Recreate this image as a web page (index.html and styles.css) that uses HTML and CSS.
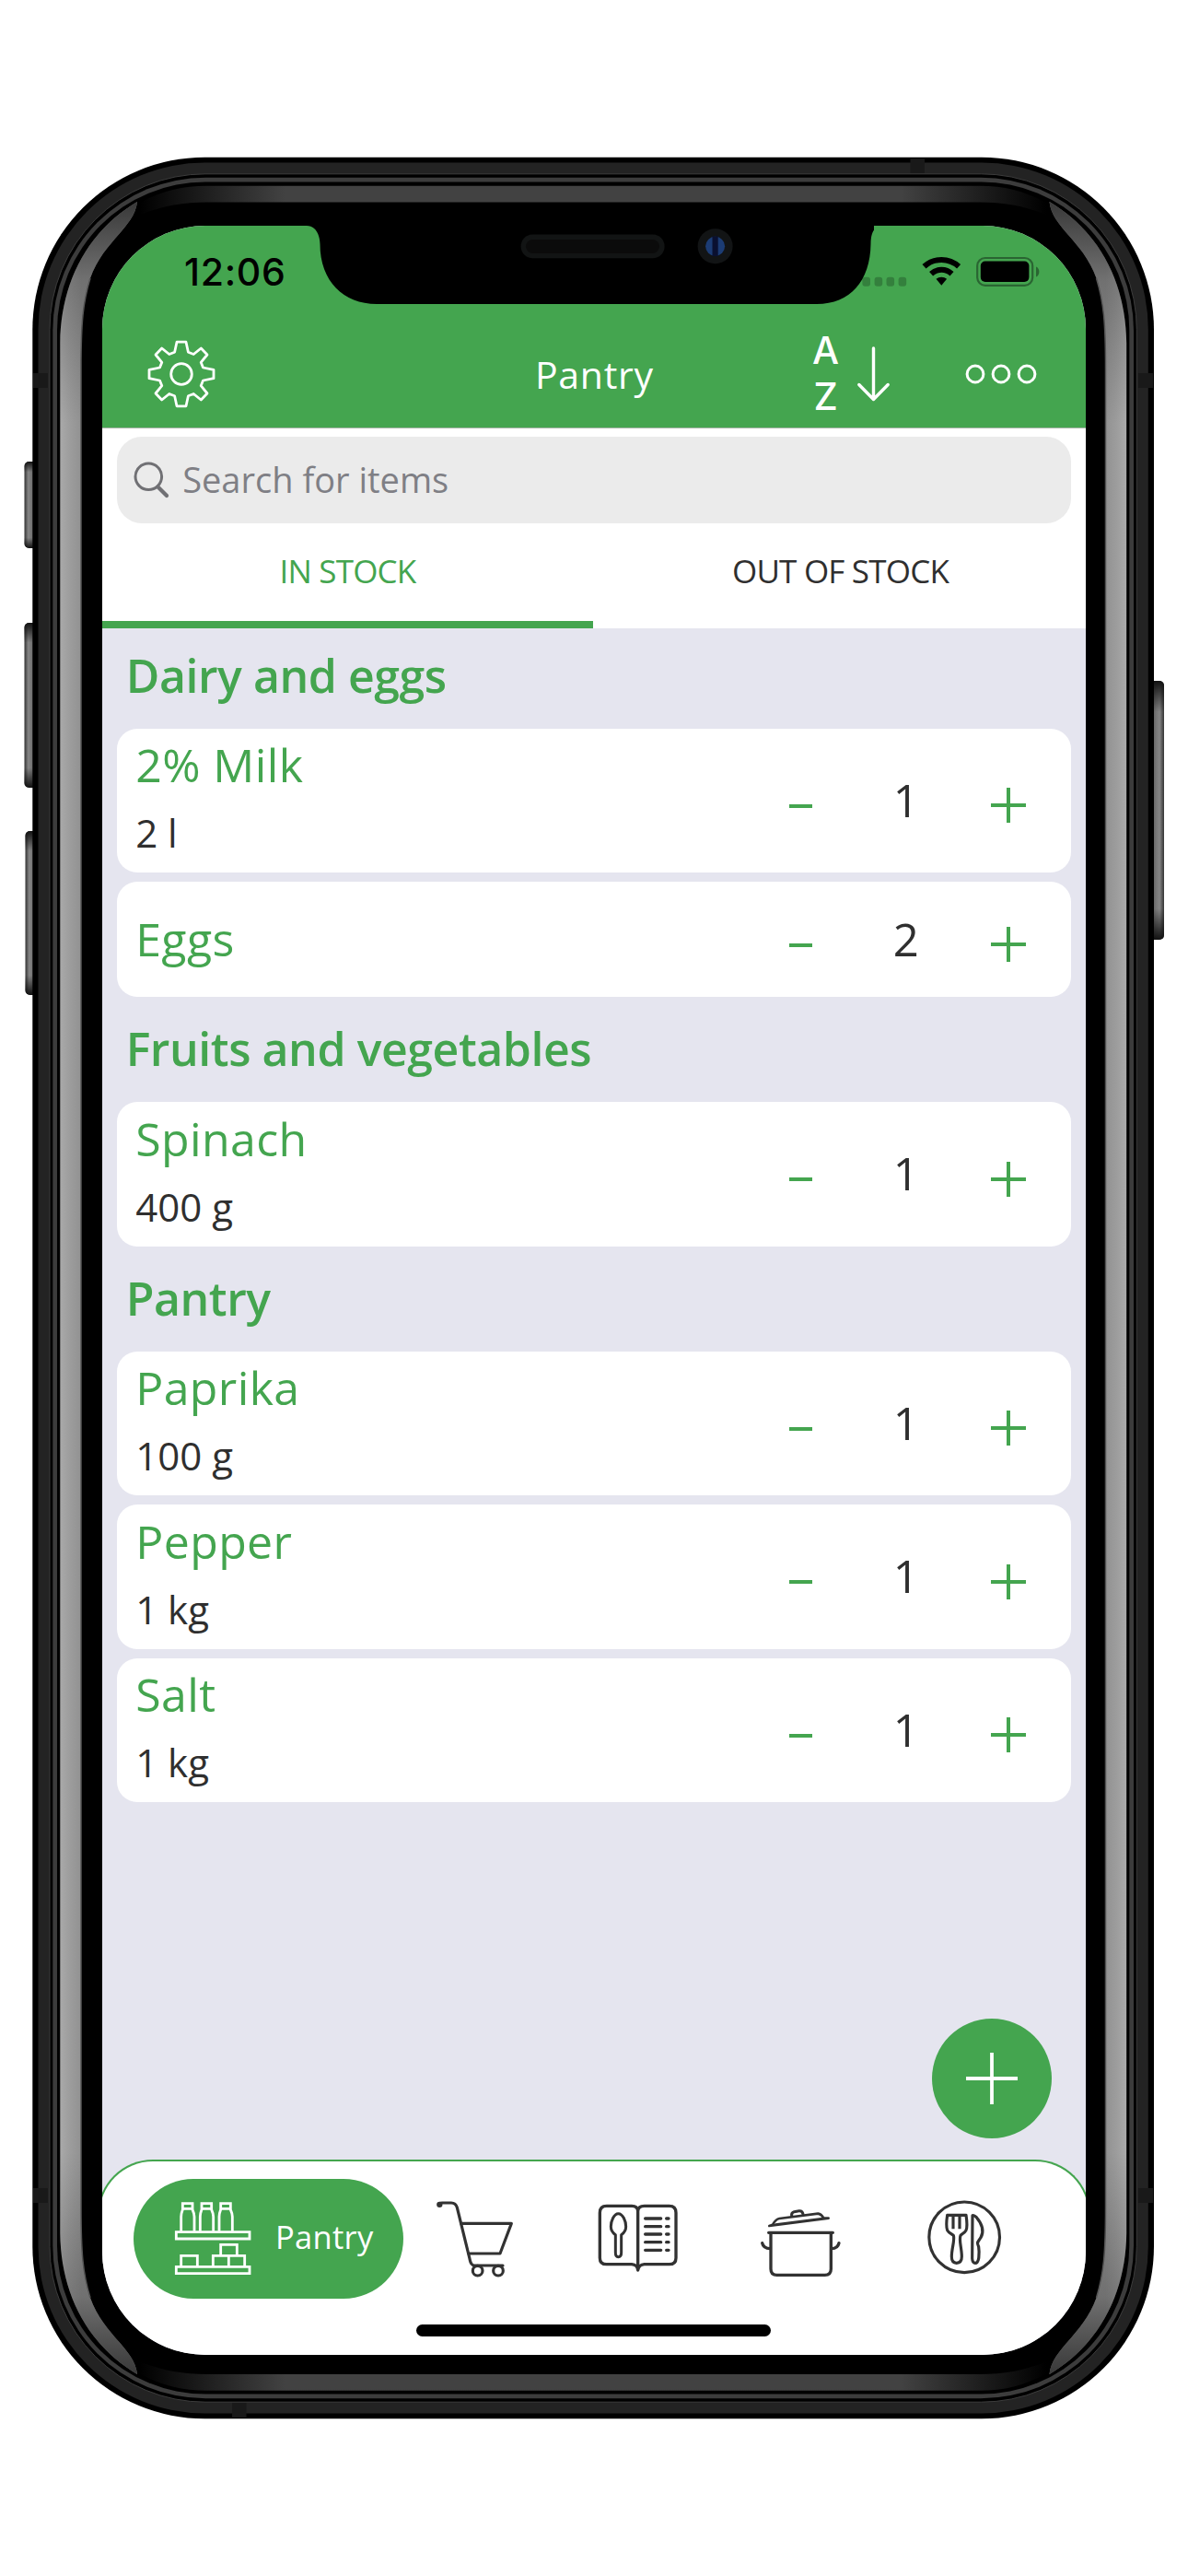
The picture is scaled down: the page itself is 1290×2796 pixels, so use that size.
FILE: index.html
```html
<!DOCTYPE html>
<html lang="en">
<head>
<meta charset="utf-8">
<title>Pantry</title>
<link rel="stylesheet" href="styles.css">
</head>
<body>
<main class="stage">
  <svg class="chassis" viewBox="0 0 1290 2796" aria-hidden="true">
    <defs>
      <linearGradient id="btnL" x1="0" x2="1" y1="0" y2="0">
        <stop offset="0" stop-color="#333"/><stop offset=".3" stop-color="#858585"/><stop offset=".55" stop-color="#757575"/><stop offset="1" stop-color="#4a4a4a"/>
      </linearGradient>
      <linearGradient id="btnShade" x1="0" x2="0" y1="0" y2="1">
        <stop offset="0" stop-color="#111"/><stop offset=".12" stop-color="#111" stop-opacity="0"/><stop offset=".88" stop-color="#111" stop-opacity="0"/><stop offset="1" stop-color="#111"/>
      </linearGradient>
      <linearGradient id="steel" gradientUnits="userSpaceOnUse" x1="65" x2="88" y1="0" y2="0">
        <stop offset="0" stop-color="#aaa"/><stop offset=".5" stop-color="#9c9c9c"/><stop offset="1" stop-color="#929292"/>
      </linearGradient>
      <linearGradient id="steelShade" gradientUnits="userSpaceOnUse" x1="0" x2="0" y1="219" y2="460">
        <stop offset="0" stop-color="#222" stop-opacity=".8"/><stop offset=".35" stop-color="#222" stop-opacity=".3"/><stop offset="1" stop-color="#222" stop-opacity="0"/>
      </linearGradient>
      <linearGradient id="bar" gradientUnits="userSpaceOnUse" x1="152" x2="1136" y1="0" y2="0">
        <stop offset="0" stop-color="#000"/><stop offset=".16" stop-color="#424242"/><stop offset=".84" stop-color="#424242"/><stop offset="1" stop-color="#000"/>
      </linearGradient>
      <g id="side">
        <path fill="url(#steel)" d="M65.3 1398V372C66 310 92 253 149 219C146 247 112 262 98 302C90 328 88 350 88 400V1398Z"/>
        <path fill="url(#steelShade)" d="M65.3 460V372C66 310 92 253 149 219C146 247 112 262 98 302C90 328 88 350 88 400V460Z"/>
        <path fill="none" stroke="#555" stroke-width="1.5" d="M88 1398V400C88 350 90 328 98 302"/>
      </g>
      <path id="topbar" fill="url(#bar)" d="M152 220C175 207 200 201.7 224 201.7H1064C1090 201.7 1112 207 1136 220V233C1110 223 1090 219.5 1064 219.5H224C200 219.5 178 223 152 233Z"/>
    </defs>
    <g>
      <rect x="26.5" y="501" width="14" height="94" rx="5" fill="url(#btnL)"/><rect x="26.5" y="501" width="14" height="94" rx="5" fill="url(#btnShade)"/>
      <rect x="26.5" y="676" width="14" height="179" rx="5" fill="url(#btnL)"/><rect x="26.5" y="676" width="14" height="179" rx="5" fill="url(#btnShade)"/>
      <rect x="27.5" y="902" width="14" height="178" rx="5" fill="url(#btnL)"/><rect x="27.5" y="902" width="14" height="178" rx="5" fill="url(#btnShade)"/>
      <g transform="matrix(-1 0 0 1 1288.5 0)"><rect x="24.5" y="739" width="16" height="281" rx="5" fill="url(#btnL)"/><rect x="24.5" y="739" width="16" height="281" rx="5" fill="url(#btnShade)"/></g>
    </g>
    <rect x="35.3" y="170.7" width="1217.7" height="2454.6" rx="187" fill="#000"/>
    <rect x="41.5" y="176.5" width="1205.3" height="2443" rx="181" fill="#232323"/>
    <rect x="54" y="188.8" width="1180.3" height="2418.4" rx="169" fill="#000" stroke="#3c3c3c" stroke-width="1"/>
    <rect x="57.3" y="192.7" width="1173.7" height="2410.6" rx="166" fill="#3c3c3c"/>
    <rect x="62" y="197.4" width="1164.3" height="2401.2" rx="161" fill="#000"/>
    <use href="#topbar"/>
    <use href="#topbar" transform="matrix(1 0 0 -1 0 2796.5)"/>
    <use href="#side"/>
    <use href="#side" transform="matrix(-1 0 0 1 1288.5 0)"/>
    <use href="#side" transform="matrix(1 0 0 -1 0 2796)"/>
    <use href="#side" transform="matrix(-1 0 0 -1 1288.5 2796)"/>
    <g fill="#191919">
      <path d="M988.5 172h15.5v16h-15.5zM252 2608h15.5v16h-15.5zM36 405h16v16h-16zM36 2375h16v16h-16zM1236 405h16v16h-16zM1236 2375h16v16h-16z"/>
    </g>
  </svg>

  <section class="screen">
    <header class="header">
      <div class="status">
        <span class="clock">12:06</span>
        <svg class="signal" viewBox="0 0 190 36" aria-hidden="true">
          <g fill="#34803d"><rect x="-3.6" y="23.7" width="8.6" height="10" rx="3"/><rect x="9.6" y="23.7" width="8.6" height="10" rx="3"/><rect x="22.5" y="23.7" width="8.6" height="10" rx="3"/><rect x="35.6" y="23.7" width="8.6" height="10" rx="3"/></g>
          <g transform="translate(82.3 33)">
            <path d="M-5.8-7.2A9 9 0 0 1 5.8-7.2L0-.3Z"/>
            <path fill="none" stroke="#000" stroke-width="6" d="M-11.2-12.8A16.5 16.5 0 0 1 11.2-12.8M-18.8-20.8A27.8 27.8 0 0 1 18.8-20.8"/>
          </g>
          <rect x="121.2" y="3" width="60" height="29.8" rx="8.5" fill="none" stroke="#2a6532" stroke-width="2.2"/>
          <rect x="124.8" y="6.6" width="52.6" height="22.4" rx="5"/>
          <path d="M185 12.5c4.5 1.6 4.5 9.400 0 11z" fill="#2a6532"/>
        </svg>
      </div>
      <nav class="navbar">
        <svg class="gear" viewBox="-38 -38 76 76" aria-hidden="true">
          <g fill="none" stroke="#fff" stroke-width="2.8" stroke-linejoin="round">
            <path d="M-5-34.800H5L7.400-23.700L13.200-21.500L21.300-28L28-21L21.200-12.700L23.500-7L35-4.700V4.700L23.500 7L21.200 12.700L28 21L21.300 28L13.200 21.500L7.400 23.700L5 34.800H-5L-7.400 23.700L-13.200 21.500L-21.300 28L-28 21L-21.200 12.700L-23.500 7L-35 4.700V-4.700L-23.500-7L-21.200-12.700L-28-21L-21.300-28L-13.200-21.500L-7.400-23.700Z"/>
            <circle r="11.300"/>
          </g>
        </svg>
        <h1 class="title">Pantry</h1>
        <div class="sort">
          <span class="az"><span>A</span><span>Z</span></span>
          <svg class="arrow" viewBox="0 0 38 62" aria-hidden="true"><path d="M18.500 3V57M2.800 42.500L18.500 58.500L34.200 42.500" fill="none" stroke="#fff" stroke-width="3.400" stroke-linecap="round" stroke-linejoin="round"/></svg>
        </div>
        <svg class="more" viewBox="0 0 78 22" aria-hidden="true"><g fill="none" stroke="#fff" stroke-width="3"><circle cx="11" cy="11" r="8.900"/><circle cx="39" cy="11" r="8.900"/><circle cx="67" cy="11" r="8.900"/></g></svg>
      </nav>
    </header>
    <svg class="notch" viewBox="222 -1 616 90" aria-hidden="true">
      <path d="M222-1V0C231 0 236 8 236.500 20C236.500 60 262 85 298 85H776C812 85 834 60 834.500 20C834.500 7 838.500 0 848 0V-1Z"/>
      <rect x="454.600" y="9.600" width="156" height="25.600" rx="12.800" fill="#121414"/>
      <rect x="460" y="15" width="145" height="15" rx="7.500" fill="#0b0b0b"/>
      <circle cx="665.600" cy="22.300" r="19" fill="#121415"/>
      <circle cx="665.600" cy="22.300" r="10.500" fill="#1c3c74"/>
      <path d="M662.500 11.500h6.200v21.600h-6.200z" fill="#0a1030"/>
    </svg>

    <div class="top">
      <div class="search">
        <svg class="glass" viewBox="0 0 40 40" aria-hidden="true"><g fill="none" stroke="#707074" stroke-linecap="round"><circle cx="16.300" cy="16.300" r="14.300" stroke-width="3"/><path d="M26.500 27.500L36 37" stroke-width="4.200"/></g></svg>
        <span>Search for items</span>
      </div>
      <div class="tabs">
        <div class="tab tab-on">IN STOCK</div>
        <div class="tab">OUT OF STOCK</div>
      </div>
    </div>

    <div class="list">
      <section class="group">
        <h2>Dairy and eggs</h2>
        <div class="cards">
          <article class="card"><div class="info"><div class="name">2% Milk</div><div class="amount">2 l</div></div><div class="stepper"><i class="minus"></i><b class="qty">1</b><i class="plus"></i></div></article>
          <article class="card card-short"><div class="info"><div class="name">Eggs</div></div><div class="stepper"><i class="minus"></i><b class="qty">2</b><i class="plus"></i></div></article>
        </div>
      </section>
      <section class="group">
        <h2>Fruits and vegetables</h2>
        <div class="cards">
          <article class="card"><div class="info"><div class="name">Spinach</div><div class="amount">400 g</div></div><div class="stepper"><i class="minus"></i><b class="qty">1</b><i class="plus"></i></div></article>
        </div>
      </section>
      <section class="group">
        <h2>Pantry</h2>
        <div class="cards">
          <article class="card"><div class="info"><div class="name">Paprika</div><div class="amount">100 g</div></div><div class="stepper"><i class="minus"></i><b class="qty">1</b><i class="plus"></i></div></article>
          <article class="card"><div class="info"><div class="name">Pepper</div><div class="amount">1 kg</div></div><div class="stepper"><i class="minus"></i><b class="qty">1</b><i class="plus"></i></div></article>
          <article class="card"><div class="info"><div class="name">Salt</div><div class="amount">1 kg</div></div><div class="stepper"><i class="minus"></i><b class="qty">1</b><i class="plus"></i></div></article>
        </div>
      </section>
    </div>

    <button class="fab" aria-label="Add"><svg viewBox="0 0 56 56" aria-hidden="true"><path d="M0 28H56M28 0V56" stroke="#fff" stroke-width="3.800"/></svg></button>

    <footer class="tabbar">
      <div class="items">
        <div class="pill">
          <svg class="shelf" viewBox="27 24 252 246" aria-hidden="true">
            <g fill="none" stroke="#fff" stroke-width="8.500">
              <path d="M34 125H273V147H34ZM34 238H273V260H34Z"/>
              <path d="M50 122V75Q50 65 55 52V32H87V52Q93 65 93 75V122M55 49H87"/>
              <path d="M112 122V75Q112 65 117 52V32H149V52Q155 65 155 75V122M117 49H149"/>
              <path d="M174 122V75Q174 65 179 52V32H211V52Q217 65 217 75V122M179 49H211"/>
              <path d="M50 235V202H103V235M154 235V202H257V235M205 202V235M179 200V166H232V200"/>
            </g>
          </svg>
          <span>Pantry</span>
        </div>
        <svg class="cart" viewBox="876 21 258 258" aria-hidden="true">
          <g fill="none" stroke="#323232" stroke-width="9.500" stroke-linecap="round" stroke-linejoin="round">
            <path d="M891 38Q891 33 900 33H930C941 33 946 38 949 48L990 215C992 227 996 237 1006 237H1098"/>
            <path d="M962 100H1126L1089 198H987"/>
            <circle cx="1016" cy="254" r="16"/><circle cx="1083" cy="254" r="16"/>
          </g>
          <circle cx="892" cy="38.500" r="9.500" fill="#323232"/>
        </svg>
        <svg class="book" viewBox="29 21 264 258" aria-hidden="true">
          <g fill="none" stroke="#323232" stroke-width="10" stroke-linecap="round" stroke-linejoin="round">
            <path d="M160 246V60Q159 43 140 43H58Q36 43 36 65V212Q36 233 58 233H140Q158 234 160 252Q163 234 181 233H262Q284 233 284 212V65Q284 43 262 43H181Q161 43 160 60"/>
            <path d="M87 137C76 129 72 120 72 110C72 93 82 68 96 68C111 68 121 93 121 110C121 120 117 129 106 137V195Q106 209 96 209Q87 209 87 195Z" stroke-width="9"/>
            <path d="M184 84H235M253 84H260M184 110H235M253 110H260M184 135H235M253 135H260M184 161H235M253 161H260M184 187H235M253 187H260"/>
          </g>
        </svg>
        <svg class="pot" viewBox="558 21 264 258" aria-hidden="true">
          <g fill="none" stroke="#323232" stroke-width="10" stroke-linecap="round" stroke-linejoin="round">
            <path d="M587 130H796M594 132V248Q594 268 614 268H770Q790 268 790 248V132"/>
            <path d="M566 164Q570 182 592 182M816 164Q812 182 792 182"/>
            <path d="M589 108L600 104Q610 86 622 84L748 68Q758 69 766 82L782 83ZM610 104L764 84" stroke-width="8"/>
            <path d="M662 76Q660 65 670 62L686 59Q697 58 699 70" stroke-width="9"/>
          </g>
        </svg>
        <svg class="plate" viewBox="13 21 258 258" aria-hidden="true">
          <g fill="none" stroke="#323232" stroke-width="9.500" stroke-linejoin="round">
            <circle cx="142.500" cy="145" r="115"/>
            <path d="M87 73H148C152 100 153 112 148 122C143 131 136 133 130 139C124 155 134 180 134 208C134 222 127 229 117 229C106 229 101 222 101 208C101 180 112 155 107 139C100 133 92 131 87 122C83 112 83 100 87 73ZM106 75V118M127 75V118"/>
            <path d="M169 74Q174 72 182 80C204 106 206 128 196 146C186 162 182 160 189 176C192 195 190 205 189 214Q186 229 178 229Q169 229 168 214Z"/>
          </g>
        </svg>
      </div>
      <div class="home"></div>
    </footer>
  </section>
</main>
</body>
</html>
```

FILE: styles.css
```css
* { box-sizing: border-box; }

body {
  margin: 0;
  background: #fff;
  font-family: "Open Sans", "Noto Sans", sans-serif;
  color: #2f2f2f;
}

svg { display: block; flex: none; }

.stage {
  position: relative;
  width: 1290px;
  height: 2796px;
  padding: 245px 0 0 111px;
  overflow: hidden;
}

.chassis {
  position: absolute;
  inset: 0;
  width: 1290px;
  height: 2796px;
}

.screen {
  position: relative;
  display: flex;
  flex-direction: column;
  width: 1068px;
  height: 2310.500px;
  border-radius: 112px;
  overflow: hidden;
  background: #e5e5ef;
}

.header {
  height: 220px;
  border-bottom: 1px solid #a3b3a3;
  background: #44a54f;
  color: #fff;
}

.status {
  display: flex;
  align-items: center;
  justify-content: space-between;
  height: 100px;
  padding: 0 49px 0 89px;
  color: #000;
}

.clock {
  font: 500 41px/50px Inter, sans-serif;
  letter-spacing: 0.700px;
}

.signal { width: 190px; height: 36px; overflow: visible; }

.navbar {
  display: flex;
  align-items: center;
  height: 119px;
  padding: 3px 52px 0 48px;
}

.gear { width: 76px; height: 76px; }

.title {
  width: 130px;
  margin: 0 0 0 346px;
  font-size: 41px;
  font-weight: 400;
  letter-spacing: 0.700px;
  white-space: nowrap;
}

.sort {
  display: flex;
  align-items: center;
  width: 86px;
  margin-left: 171px;
  gap: 19px;
}

.az {
  display: flex;
  flex-direction: column;
  align-items: center;
  width: 30px;
  padding-bottom: 2px;
  font: 500 41px/50px Inter, sans-serif;
}

.arrow { width: 38px; height: 62px; }

.more { width: 78px; height: 22px; margin-left: 80px; }

.notch {
  position: absolute;
  left: 222px;
  top: -1px;
  width: 616px;
  height: 90px;
}

.top {
  height: 216.500px;
  padding-top: 9px;
  background: #fff;
}

.search {
  display: flex;
  align-items: center;
  gap: 13px;
  height: 93.500px;
  margin: 0 16.200px;
  padding: 0 19px 2px;
  border-radius: 27px;
  background: #ebebeb;
  color: #7f7f85;
  font-size: 38px;
}

.glass { width: 40px; height: 40px; margin: 3px 0 0 -1px; }

.tabs { display: flex; height: 114px; }

.tab {
  flex: 1;
  padding-bottom: 3px;
  border-bottom: 8px solid transparent;
  font-size: 35px;
  line-height: 103px;
  letter-spacing: -0.800px;
  text-align: center;
}

.tab + .tab { padding-left: 2px; }

.tab-on { color: #44a54f; border-color: #44a54f; }

.list { flex: 1; padding: 0 16.200px; }

.group + .group { margin-top: 5px; }

h2 {
  margin: 0;
  padding: 1px 0 8px 9.500px;
  color: #44a54f;
  font-size: 50px;
  font-weight: 650;
  line-height: 100px;
  letter-spacing: -0.450px;
}

.cards { display: flex; flex-direction: column; gap: 10px; }

.card {
  display: flex;
  justify-content: space-between;
  height: 156.500px;
  padding: 0 49px 0 20px;
  border-radius: 22px;
  background: #fff;
}

.info { padding-top: 4.500px; }

.name {
  color: #44a54f;
  font-size: 50px;
  line-height: 70px;
  letter-spacing: 0.400px;
}

.amount { font-size: 42px; line-height: 78px; }

.card-short { height: 125px; align-items: center; }
.card-short .info { padding: 0 0 2px; }

.stepper {
  display: flex;
  align-items: center;
  align-self: stretch;
}

.minus {
  width: 25px;
  height: 4px;
  margin-top: 12px;
  background: #44a54f;
}

.qty {
  width: 60px;
  margin: 0 62px 0 72px;
  padding-bottom: 2px;
  font-size: 49px;
  font-weight: 400;
  line-height: 60px;
  text-align: center;
}

.plus {
  width: 38px;
  height: 38px;
  margin-top: 11px;
  background:
    linear-gradient(#44a54f, #44a54f) center / 38px 4px no-repeat,
    linear-gradient(#44a54f, #44a54f) center / 4px 38px no-repeat;
}

.fab {
  position: absolute;
  right: 37px;
  bottom: 234.500px;
  display: grid;
  place-items: center;
  width: 130px;
  height: 130px;
  padding: 0 1px 1px 0;
  border: 0;
  border-radius: 50%;
  background: #44a54f;
}

.fab svg { width: 56px; height: 56px; }

.tabbar {
  height: 211.500px;
  margin: 0 -5px;
  padding: 19px 5px 0 39px;
  border: 2px solid #44a54f;
  border-bottom: 0;
  border-radius: 60px 60px 0 0;
  background: #fff;
}

.items { display: flex; align-items: center; height: 130px; }

.pill {
  display: flex;
  align-items: center;
  width: 293px;
  height: 130px;
  margin-left: -2px;
  padding-left: 44px;
  gap: 26px;
  border-radius: 65px;
  background: #44a54f;
  color: #fff;
  font-size: 34.500px;
  letter-spacing: 0.300px;
}

.pill span { padding-bottom: 5px; }

.shelf { width: 84px; height: 82px; }
.cart { width: 86px; height: 86px; margin-left: 34px; }
.book { width: 88px; height: 86px; margin-left: 91px; }
.pot { width: 88px; height: 86px; margin-left: 88px; }
.plate { width: 86px; height: 86px; margin-left: 91px; }

.home {
  width: 385px;
  height: 13px;
  margin: 28px 0 0 304.500px;
  border-radius: 6.500px;
  background: #000;
}
```
